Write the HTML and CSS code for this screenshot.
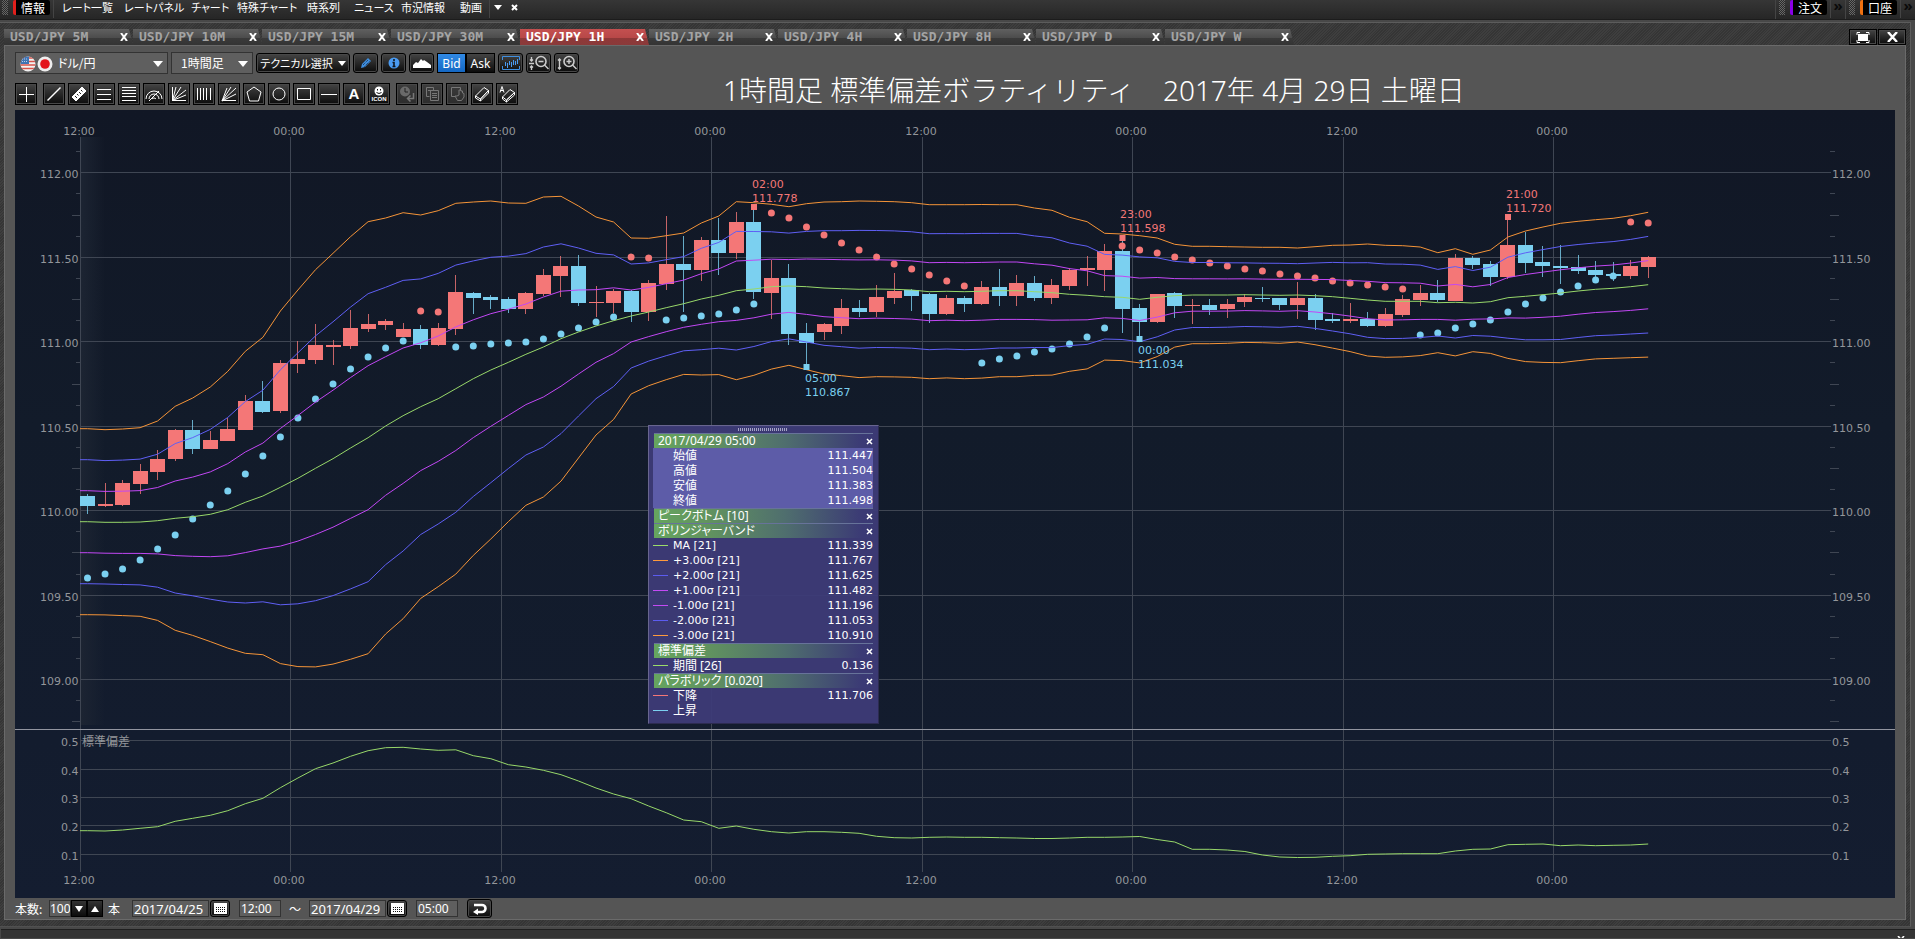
FILE: index.html
```html
<!DOCTYPE html>
<html lang="ja">
<head>
<meta charset="utf-8">
<title>USD/JPY 1H</title>
<link rel="stylesheet" href="styles.css">
</head>
<body>
<header class="menubar">
  <span class="grip"></span>
  <span class="badge badge-red">情報</span>
  <nav class="menu">
    <a href="#">レート一覧</a>
    <a href="#">レートパネル</a>
    <a href="#">チャート</a>
    <a href="#">特殊チャート</a>
    <a href="#">時系列</a>
    <a href="#">ニュース</a>
    <a href="#">市況情報</a>
    <a href="#">動画</a>
  </nav>
  <button class="bare menu-more" aria-label="メニュー"><svg width="8" height="5"><path d="M0 0h8L4 5z" fill="#fff"/></svg></button>
  <button class="bare menu-close" aria-label="閉じる"><svg width="7" height="7"><path d="M1 1l5 5M6 1l-5 5" stroke="#fff" stroke-width="2"/></svg></button>
  <div class="dock">
    <span class="grip"></span><span class="badge badge-violet">注文</span><button class="bare more" aria-label="注文メニュー">»</button>
  </div>
  <div class="dock">
    <span class="grip"></span><span class="badge badge-orange">口座</span><button class="bare more" aria-label="口座メニュー">»</button>
  </div>
</header>

<main class="window">
  <div class="tabbar">
    <div class="tab"><a href="#">USD/JPY 5M</a><button class="bare" aria-label="閉じる"><svg width="8" height="8"><path d="M1 0l6 8M7 0l-6 8"/></svg></button></div>
    <div class="tab"><a href="#">USD/JPY 10M</a><button class="bare" aria-label="閉じる"><svg width="8" height="8"><path d="M1 0l6 8M7 0l-6 8"/></svg></button></div>
    <div class="tab"><a href="#">USD/JPY 15M</a><button class="bare" aria-label="閉じる"><svg width="8" height="8"><path d="M1 0l6 8M7 0l-6 8"/></svg></button></div>
    <div class="tab"><a href="#">USD/JPY 30M</a><button class="bare" aria-label="閉じる"><svg width="8" height="8"><path d="M1 0l6 8M7 0l-6 8"/></svg></button></div>
    <div class="tab active"><a href="#">USD/JPY 1H</a><button class="bare" aria-label="閉じる"><svg width="8" height="8"><path d="M1 0l6 8M7 0l-6 8"/></svg></button></div>
    <div class="tab"><a href="#">USD/JPY 2H</a><button class="bare" aria-label="閉じる"><svg width="8" height="8"><path d="M1 0l6 8M7 0l-6 8"/></svg></button></div>
    <div class="tab"><a href="#">USD/JPY 4H</a><button class="bare" aria-label="閉じる"><svg width="8" height="8"><path d="M1 0l6 8M7 0l-6 8"/></svg></button></div>
    <div class="tab"><a href="#">USD/JPY 8H</a><button class="bare" aria-label="閉じる"><svg width="8" height="8"><path d="M1 0l6 8M7 0l-6 8"/></svg></button></div>
    <div class="tab"><a href="#">USD/JPY D</a><button class="bare" aria-label="閉じる"><svg width="8" height="8"><path d="M1 0l6 8M7 0l-6 8"/></svg></button></div>
    <div class="tab"><a href="#">USD/JPY W</a><button class="bare" aria-label="閉じる"><svg width="8" height="8"><path d="M1 0l6 8M7 0l-6 8"/></svg></button></div>
    <div class="winbtns">
      <button class="btn" aria-label="最大化"><svg width="14" height="11"><path d="M1 3V.5h3M10 .5h3V3M13 8v2.500h-3M4 10.500H1V8" fill="none" stroke="#fff"/><rect x="2" y="2" width="10" height="7" fill="#fff"/></svg></button>
      <button class="btn" aria-label="閉じる"><svg width="11" height="10"><path d="M1 0l9 10M10 0L1 10" stroke="#fff" stroke-width="2.400"/></svg></button>
    </div>
  </div>

  <section class="panel">
    <div class="head">
      <div class="tools">
        <div class="row row-main">
          <label class="pick pick-pair">
            <svg class="flags" width="34" height="16" viewBox="0 0 34 16">
              <defs><clipPath id="us"><circle cx="8" cy="8" r="7.500"/></clipPath></defs>
              <g clip-path="url(#us)"><rect width="16" height="16" fill="#f2f2f2"/><path d="M0 2h16M0 5.500h16M0 9h16M0 12.500h16" stroke="#d9534a" stroke-width="1.600"/><rect width="9" height="8" fill="#3f74b4"/><path d="M2 3h6M2 5.500h6" stroke="#b8cfe8" stroke-dasharray="1 1"/></g>
              <circle cx="25" cy="8" r="7.500" fill="#eee"/><circle cx="25" cy="8" r="4.800" fill="#e3151c"/>
            </svg>
            <select aria-label="通貨ペア"><option>ドル/円</option></select>
          </label>
          <label class="pick pick-time"><select aria-label="足種"><option>1時間足</option></select></label>
          <button class="btn tech">テクニカル選択 <svg width="8" height="5"><path d="M0 0h8L4 5z" fill="#fff"/></svg></button>
          <button class="btn" aria-label="描画"><svg width="14" height="14"><path d="M2 12l1-4 6-6 3 3-6 6z" fill="#3f8fe0"/><path d="M4 9l5-5M5.500 10.500l5-5" stroke="#14283f" stroke-dasharray="1 1"/></svg></button>
          <button class="btn" aria-label="情報"><svg width="12" height="12"><circle cx="6" cy="6" r="5.500" fill="#4a9af0"/><path d="M6 2v2M4.500 5.500H6V9M4.500 9.500h3" stroke="#10161e" stroke-width="1.600" fill="none"/></svg></button>
          <button class="btn" aria-label="エリア"><svg width="18" height="10"><path d="M0 10V7l3-3 2 1 3-4 2 2 1-1 3 2 4 3v3z" fill="#fff"/></svg></button>
          <div class="seg"><button class="on">Bid</button><button>Ask</button></div>
          <button class="btn" aria-label="全体表示"><svg width="18" height="14"><path d="M.5 4V.5h17V4M.5 10v3.500h17V10" fill="none" stroke="#3f8fe0"/><path d="M3.500 6v4M5.500 7v5M7.500 5v4M9.500 6v5M11.500 4v5M13.500 5v4M15.500 3v5" stroke="#4a9af0"/></svg></button>
          <button class="btn" aria-label="縮小"><svg width="20" height="16"><circle cx="12" cy="6.500" r="5" fill="none" stroke="#ccc" stroke-width="1.600"/><path d="M9.500 6.500h5M15.500 10l4 4M2.500 2v4M1 4.500L2.500 6 4 4.500M0 8.500h5M2.500 15v-4M1 12.500L2.500 11 4 12.500" fill="none" stroke="#ccc" stroke-width="1.400"/></svg></button>
          <button class="btn" aria-label="拡大"><svg width="20" height="16"><circle cx="12" cy="6.500" r="5" fill="none" stroke="#ccc" stroke-width="1.600"/><path d="M9.500 6.500h5M12 4v5M15.500 10l4 4M2.500 4v10M1 5.500L2.500 4 4 5.500M1 12.500L2.500 14 4 12.500" fill="none" stroke="#ccc" stroke-width="1.400"/></svg></button>
        </div>
        <div class="row row-draw">
          <button class="btn sq first" aria-label="十字"><svg width="16" height="16"><path d="M8.500 1v15M1 8.500h15"/></svg></button>
          <button class="btn sq" aria-label="直線"><svg width="16" height="16"><path d="M1.500 14.500l13-13" stroke-width="1.500"/></svg></button>
          <button class="btn sq" aria-label="定規"><svg width="16" height="16"><path d="M1 11L11 1l4 4L5 15z" fill="#fff"/><path d="M4 10l2 2M6 8l1.500 1.500M8 6l2 2M10 4l1.500 1.500" stroke="#222"/></svg></button>
          <button class="btn sq" aria-label="三本線"><svg width="16" height="16"><path d="M1 3.500h14M1 8.500h14M1 13.500h14"/></svg></button>
          <button class="btn sq" aria-label="五本線"><svg width="16" height="16"><path d="M1 1.500h14M1 4.500h14M1 7.500h14M1 10.500h14M1 14.500h14"/></svg></button>
          <button class="btn sq" aria-label="アーク"><svg width="18" height="16"><path d="M1 13a8 8 0 0 1 16 0M4 13a5 5 0 0 1 10 0M7 13a2.500 2.500 0 0 1 4 0M4 15L14 5"/></svg></button>
          <button class="btn sq" aria-label="ファン"><svg width="16" height="16"><path d="M1.500 1v13.500H15M1.500 14.500L5 1M1.500 14.500L10 1M1.500 14.500L15 4M1.500 14.500L15 9"/></svg></button>
          <button class="btn sq" aria-label="縦線"><svg width="16" height="16"><path d="M1.500 2v12M4.500 2v12M7.500 2v12M10.500 2v12M14.500 2v12"/></svg></button>
          <button class="btn sq" aria-label="扇形"><svg width="16" height="16"><path d="M1 15L6 2M1 15L10 1M1 15L15 2M1 15L15 8M1 14.500h14"/></svg></button>
          <button class="btn sq" aria-label="多角形"><svg width="16" height="16"><path d="M8 1l7 5-2.500 9h-9L1 6z"/></svg></button>
          <button class="btn sq" aria-label="円"><svg width="16" height="16"><circle cx="8" cy="8" r="6"/></svg></button>
          <button class="btn sq" aria-label="四角"><svg width="16" height="16"><path d="M1.500 2.500h13v11h-13z"/></svg></button>
          <button class="btn sq" aria-label="水平線"><svg width="16" height="16"><path d="M0 8.500h16"/></svg></button>
          <button class="btn sq letter">A</button>
          <button class="btn sq icon-btn" aria-label="アイコン"><svg width="10" height="10"><circle cx="5" cy="5" r="4.500" fill="#fff" stroke="none"/><path d="M3.500 3v1.500M6.500 3v1.500M2.500 6.500q2.500 2 5 0" stroke="#111"/></svg><span>ICON</span></button>
          <button class="btn sq off gap" aria-label="元に戻す" disabled><svg width="16" height="16"><circle cx="6" cy="5.500" r="5" fill="#6a6a6a" stroke="none"/><path d="M6 2v4h3" stroke="#222"/><path d="M14.500 7v5.500H9M11.500 9.500l-3 3 3 3" stroke-width="1.500"/></svg></button>
          <button class="btn sq off" aria-label="コピー" disabled><svg width="16" height="16"><path d="M2.500 1.500h7v3M2.500 1.500v9h3M6.500 4.500h8v10h-8zM8 7.500h5M8 9.500h5M8 11.500h5M4 4.500h3"/></svg></button>
          <button class="btn sq off" aria-label="移動" disabled><svg width="16" height="16"><path d="M6 10.500H2.500v-9h9v3M6 10l2.500 4.500h4L15 11V7.500L13.500 7V5L12 5V4L10 4v5L8 10z"/></svg></button>
          <button class="btn sq" aria-label="消しゴム"><svg width="16" height="16"><path d="M1.500 10L10 1.500l4.500 3L6.500 13zM1.500 10v2l5 3v-2l8-8.500v2.500L6.500 15"/></svg></button>
          <button class="btn sq" aria-label="全消去"><svg width="17" height="17"><path d="M3.500 11L11 3.500l4.500 3-8 7.500zM3.500 11v2l4 3v-2l8-7.500V9l-8 7M1 6.500l2-6 2 6M1.500 4.500h3"/></svg></button>
        </div>
      </div>
      <h1 class="title">1時間足 標準偏差ボラティリティ　2017年 4月 29日 土曜日</h1>
    </div>

    <div class="chartbox">
      <svg id="chart" class="chart" viewBox="15 110 1880 788" role="img" aria-label="USD/JPY 1時間足チャート"></svg>
      <aside class="info">
        <div class="info-grip"></div>
        <table>
          <tbody>
          <tr class="hd"><th colspan="2"><div>2017/04/29 05:00<button class="bare x" aria-label="閉じる"><svg width="7" height="7"><path d="M1 1l5 5M6 1l-5 5"/></svg></button></div></th></tr>
          <tr class="hl"><td>始値</td><td>111.447</td></tr>
          <tr class="hl"><td>高値</td><td>111.504</td></tr>
          <tr class="hl"><td>安値</td><td>111.383</td></tr>
          <tr class="hl"><td>終値</td><td>111.498</td></tr>
          <tr class="hd"><th colspan="2"><div>ピークボトム [10]<button class="bare x" aria-label="閉じる"><svg width="7" height="7"><path d="M1 1l5 5M6 1l-5 5"/></svg></button></div></th></tr>
          <tr class="hd"><th colspan="2"><div>ボリンジャーバンド<button class="bare x" aria-label="閉じる"><svg width="7" height="7"><path d="M1 1l5 5M6 1l-5 5"/></svg></button></div></th></tr>
          <tr class="key num green"><td>MA [21]</td><td>111.339</td></tr>
          <tr class="key num orange"><td>+3.00σ [21]</td><td>111.767</td></tr>
          <tr class="key num blue"><td>+2.00σ [21]</td><td>111.625</td></tr>
          <tr class="key num purple"><td>+1.00σ [21]</td><td>111.482</td></tr>
          <tr class="key num purple"><td>-1.00σ [21]</td><td>111.196</td></tr>
          <tr class="key num blue"><td>-2.00σ [21]</td><td>111.053</td></tr>
          <tr class="key num orange"><td>-3.00σ [21]</td><td>110.910</td></tr>
          <tr class="hd"><th colspan="2"><div>標準偏差<button class="bare x" aria-label="閉じる"><svg width="7" height="7"><path d="M1 1l5 5M6 1l-5 5"/></svg></button></div></th></tr>
          <tr class="key green"><td>期間 [26]</td><td>0.136</td></tr>
          <tr class="hd"><th colspan="2"><div>パラボリック [0.020]<button class="bare x" aria-label="閉じる"><svg width="7" height="7"><path d="M1 1l5 5M6 1l-5 5"/></svg></button></div></th></tr>
          <tr class="key red"><td>下降</td><td>111.706</td></tr>
          <tr class="key sky"><td>上昇</td><td></td></tr>
          </tbody>
        </table>
      </aside>
    </div>

    <form class="range">
      <label for="bars">本数:</label>
      <span class="spin"><input id="bars" class="bars" value="100"><button type="button" aria-label="減らす"><svg width="8" height="6"><path d="M0 0h8L4 6z" fill="#fff"/></svg></button><button type="button" aria-label="増やす"><svg width="8" height="6"><path d="M0 6h8L4 0z" fill="#fff"/></svg></button></span>
      <span class="unit">本</span>
      <span class="date"><input class="day" aria-label="開始日" value="2017/04/25"><button type="button" class="btn cal" aria-label="カレンダー"><svg width="13" height="11"><path d="M0 0h13v11H0z" fill="#fff"/><path d="M2 4.500h9M2 6.500h9M2 8.500h9" stroke="#111" stroke-dasharray="1 1"/></svg></button></span>
      <input class="time" aria-label="開始時刻" value="12:00">
      <span class="tilde">～</span>
      <span class="date"><input class="day" aria-label="終了日" value="2017/04/29"><button type="button" class="btn cal" aria-label="カレンダー"><svg width="13" height="11"><path d="M0 0h13v11H0z" fill="#fff"/><path d="M2 4.500h9M2 6.500h9M2 8.500h9" stroke="#111" stroke-dasharray="1 1"/></svg></button></span>
      <input class="time" aria-label="終了時刻" value="05:00">
      <button type="button" class="btn go" aria-label="更新"><svg width="14" height="12"><path d="M1 2h8a3.500 3.500 0 0 1 0 7H4" fill="none" stroke="#fff" stroke-width="2.600"/><path d="M0 9l5-3.500v6.500z" fill="#fff"/></svg></button>
    </form>
  </section>
</main>

<footer class="status">
  <button class="bare" aria-label="閉じる"><svg width="8" height="7"><path d="M1 0l6 7M7 0L1 7" stroke="#fff" stroke-width="1.600"/></svg></button>
</footer>
<script src="chart.js"></script>
</body>
</html>
```

FILE: styles.css
```css
* { box-sizing: border-box; }

body {
  margin: 0;
  min-height: 100vh;
  display: flex;
  flex-direction: column;
  overflow-x: hidden;
  background: #484848;
  color: #fff;
  font: 12px/15px "Noto Sans", "Noto Sans CJK JP", sans-serif;
}

a { color: inherit; text-decoration: none; }
button, input, select { font: inherit; color: inherit; }
button { padding: 0; display: flex; align-items: center; justify-content: center; flex: none; }
svg { display: block; flex: none; }
.bare { border: 0; background: none; }

/* menu bar */
.menubar {
  display: flex;
  align-items: stretch;
  height: 20px;
  border-bottom: 1px solid #1c1c1c;
  background: linear-gradient(#363636, #262626);
}
.grip {
  width: 6px;
  height: 15px;
  margin: 0 5px 0 2px;
  background: repeating-conic-gradient(#666 0 25%, #2a2a2a 0 50%) 0 0 / 2px 2px;
}
.badge {
  height: 15px;
  padding: 0 5px;
  border-left: 3px solid red;
  border-radius: 2px;
  background: #000;
  font: 12px/15px "Noto Sans CJK JP", sans-serif;
}
.badge-red { border-color: #e0201c; }
.badge-violet { border-color: #8a00e8; }
.badge-orange { border-color: #ee7010; }
.menu {
  display: grid;
  grid-template-columns: 62px 67px 46px 70px 47px 47px 59px 29px;
  height: 18px;
  margin-left: 3px;
  padding-left: 8px;
  border-left: 1px solid #444;
  border-right: 1px solid #444;
  font: 11px/15px "Noto Sans CJK JP", sans-serif;
  font-feature-settings: "palt";
  white-space: nowrap;
}
.menu-more { width: 16px; height: 15px; }
.menu-close { width: 16px; height: 15px; margin-right: auto; }
.dock { display: flex; border-left: 1px solid #444; padding-left: 1px; }
.more {
  width: 15px;
  height: 18px;
  margin-left: 3px;
  align-items: flex-start;
  border-left: 1px solid #444;
  color: #0a0a0a;
  font-size: 15px;
  font-weight: bold;
  line-height: 10px;
}

/* window frame */
.window {
  margin: 2px 4px 0 0;
  padding: 0 4px 6px 4px;
  border-top: 1px solid #5c5c5c;
  border-right: 1px solid #5c5c5c;
  border-bottom: 1px solid #505050;
  background: repeating-linear-gradient(135deg, #353535 0 1px, #3e3e3e 1px 2px);
}
.tabbar { display: flex; height: 22px; padding-top: 6px; }
.tab {
  flex: 0 1 129px;
  display: flex;
  align-items: center;
  justify-content: space-between;
  padding: 0 5px 0 6px;
  background: linear-gradient(#606060, #4c4c4c 55%, #3a3a3a 56%, #343434);
  clip-path: polygon(0 100%, 0 0, 125px 0, 100% 100%);
  color: #a4a4a4;
  font: bold 13px/16px "DejaVu Sans Mono", monospace;
  white-space: nowrap;
}
.tab svg path { stroke: #fff; stroke-width: 2; }
.tab.active {
  background: linear-gradient(#c45050, #b84848 55%, #8f3838 56%, #8a3a3a);
  color: #fff;
}
.winbtns { display: flex; gap: 1px; margin-left: auto; }
.winbtns .btn { width: 28px; height: 16px; border-radius: 0; }

.panel {
  padding: 0 10px;
  border: 1px solid #6a6a6a;
  background: #555;
}

/* tool bars */
.head { display: flex; align-items: flex-end; height: 64px; }
.tools { width: 565px; height: 64px; padding-top: 6px; }
.row { display: flex; align-items: center; }
.row-main { height: 22px; gap: 3px; }
.row-draw { height: 22px; gap: 3px; margin-top: 9px; }
.btn {
  width: 25px;
  height: 20px;
  border: 1px solid #000;
  border-radius: 3px;
  background: linear-gradient(#444, #0c0c0c);
  box-shadow: inset 0 0 0 1px #484848;
}
.sq { width: 22px; height: 22px; border-radius: 0; }
.sq svg { fill: none; stroke: #fff; }
.first { margin-right: 3px; }
.gap { margin-left: 3px; }
.off { background: linear-gradient(#3c3c3c, #2c2c2c); }
.off svg { stroke: #777; }
.letter { font: bold 15px/18px "Liberation Sans", sans-serif; }
.icon-btn { flex-direction: column; }
.icon-btn span { font: bold 6px/6px "Liberation Sans", sans-serif; }
.pick {
  position: relative;
  display: flex;
  font: 12px/18px "Noto Sans CJK JP", sans-serif;
  font-feature-settings: "palt";
}
.pick select {
  width: 100%;
  height: 22px;
  padding: 0 20px 0 9px;
  border: 1px solid #333;
  border-radius: 0;
  background: #5f5f5f;
  appearance: none;
}
.pick::after {
  content: "";
  position: absolute;
  right: 5px;
  top: 9px;
  border: 5px solid transparent;
  border-top: 6px solid #fff;
  border-bottom: 0;
}
.pick-pair { width: 153px; }
.pick-pair select { padding-left: 42px; }
.pick-time { width: 82px; }
.flags { position: absolute; left: 5px; top: 4px; }
.tech {
  width: 94px;
  gap: 5px;
  font: 11px/16px "Noto Sans CJK JP", sans-serif;
  font-feature-settings: "palt";
  white-space: nowrap;
}
.seg { display: flex; }
.seg button {
  width: 29px;
  height: 20px;
  border: 1px solid #000;
  background: linear-gradient(#444, #0c0c0c);
}
.seg .on { background: linear-gradient(#3089e4, #1468c4); }
.title {
  margin: 0 0 0 143px;
  padding-bottom: 2px;
  font: 28px/36px "Noto Sans", "Noto Sans CJK JP", sans-serif;
  font-weight: 300;
  white-space: nowrap;
}

/* chart */
.chartbox { position: relative; }
.chart {
  width: 100%;
  height: auto;
  background: linear-gradient(#111725, #121b2a 40%, #131c2e 80%, #141d30);
}
.grid line { stroke: #3f4653; }
.axis text { fill: #93969a; font: 11px "DejaVu Sans", "Noto Sans CJK JP", sans-serif; }
.axis .name { font-size: 12px; }
.peak text { font: 11px "DejaVu Sans", sans-serif; }
.up { fill: #f47777; stroke: #f47777; }
.down { fill: #7bd0f0; stroke: #7bd0f0; }
.wick { stroke-width: 1; opacity: .8; }
.body, .dot, .peak text { stroke: none; }
.band { fill: none; stroke-width: 1; }
.o { stroke: #f59438; }
.b { stroke: #5f5ff5; }
.p { stroke: #c247f5; }
.g { stroke: #98d86a; }

.info {
  position: absolute;
  left: 633px;
  top: 315px;
  width: 231px;
  padding: 2px 5px 5px 4px;
  border: 1px solid #68658f;
  border-right-color: #2c2b50;
  border-bottom-color: #2c2b50;
  background: rgba(62, 59, 120, .94);
}
.info-grip {
  width: 50px;
  height: 3px;
  margin: 0 auto 2px;
  background: repeating-linear-gradient(90deg, #a5a4c4 0 1px, transparent 1px 2px);
}
.info table { width: 100%; border-collapse: collapse; }
.info tr { height: 15px; }
.info th, .info td { padding: 0; font-weight: normal; line-height: 15px; text-align: left; white-space: nowrap; }
.info td:first-child { padding-left: 20px; }
.info td:last-child { text-align: right; }
.info td:last-child, .info .num td { font: 11px/15px "DejaVu Sans", sans-serif; }
.hd div {
  display: flex;
  justify-content: space-between;
  align-items: center;
  height: 15px;
  margin-left: 1px;
  padding: 0 0 0 4px;
  border-top: 1px solid #67739a;
  background: linear-gradient(90deg, #66a55f 0, #61935f 25%, #4f6e6e 60%, #3b3a75 95%);
  font-feature-settings: "palt";
  line-height: 14px;
}
.hl { background: #5d5ca8; }
.x svg { stroke: #fff; stroke-width: 1.500px; }
.key td:first-child { background: linear-gradient(var(--c), var(--c)) 0 7px / 15px 1px no-repeat; }
.green { --c: #9bdc6a; }
.orange { --c: #ff9a3c; }
.blue { --c: #5c5cf0; }
.purple { --c: #c44af5; }
.red { --c: #f47777; }
.sky { --c: #7bd0f0; }

/* date range */
.range {
  display: flex;
  align-items: center;
  height: 21px;
  font: 12px/16px "Noto Sans CJK JP", sans-serif;
}
.range input {
  height: 17px;
  padding: 0 1px;
  border: 1px solid #333;
  background: #5f5f5f;
  font: 12px/15px "Noto Sans", sans-serif;
}
.range label { width: 34px; }
.spin, .date { display: flex; align-items: center; }
.spin button { width: 16px; height: 17px; border: 1px solid #000; background: linear-gradient(#333, #0c0c0c); }
.range .bars { width: 22px; padding: 0; }
.unit { width: 29px; padding-left: 5px; }
.range .day { width: 77px; font-size: 13px; }
.cal { width: 20px; height: 17px; margin-left: 1px; }
.time { width: 42px; margin-left: 9px; }
.tilde { width: 28px; padding-left: 8px; }
.go { height: 19px; margin-left: 9px; }

.status {
  flex: 1;
  display: flex;
  justify-content: flex-end;
  align-items: flex-start;
  min-height: 8px;
  margin: 2px 0 0 1px;
  padding: 6px 10px 0 0;
  border-top: 1px solid #1f1f1f;
  background: #343434;
  max-height: 9px;
  overflow: hidden;
}
```

FILE: chart.js
```js
const svg = document.getElementById('chart');
const X0 = 87.5, STEP = 17.536;
const xAt = i => X0 + STEP * i;
const parts = [];

// direction, high, body top, body bottom, low
const candles = `d494,496,506,514 u483,504,506,507 u480,483,505,506 u464,471,484,494 u450,459,472,480 u429,430,459,461
d420,430,449,454 u431,440,449,449 u418,429,441,441 u395,401,430,430 d381,401,412,413 u360,363,411,413
u341,359,364,373 u324,345,360,364 u340,345,347,365 u310,328,346,349 u314,324,329,332 u319,321,325,330
u323,329,337,337 d325,329,345,349 u323,328,345,346 u275,292,329,335 d292,293,298,314 d295,297,300,309
d297,299,309,313 u292,293,309,314 u269,275,294,296 u256,266,276,297 d255,266,303,306 u286,302,303,317
u289,291,303,313 d290,291,312,322 u280,283,312,321 u216,264,284,290 d236,264,270,312 u237,240,270,281
d218,240,253,275 u212,222,253,259 d207,222,292,299 u260,278,293,319 d264,278,334,345 d323,333,343,367
u323,324,332,340 u299,308,326,334 d300,308,312,317 u285,297,312,317 u273,291,298,304 d289,290,296,311
d293,294,314,323 u295,298,314,315 d296,298,304,312 u281,287,304,305 d269,287,296,306 u275,283,296,306
d276,283,298,301 u279,285,298,304 u268,270,286,290 u256,268,270,286 u244,251,270,291 d240,251,309,333
d304,308,322,339 u294,294,322,323 d292,293,306,318 u299,305,306,324 d299,305,310,315 u299,304,309,318
u294,297,302,307 d287,298,299,302 d298,298,305,310 u282,298,305,319 d294,298,320,330 d313,319,321,323
u303,319,321,323 d312,319,326,327 u308,314,326,327 u295,299,315,317 u285,293,300,306 d280,293,300,302
u254,258,301,301 d256,258,265,269 d261,264,277,286 u217,245,277,279 d232,245,263,273 d246,262,266,277
d245,266,268,284 d255,267,271,274 d261,270,275,280 d262,274,276,281 u260,266,276,279 u256,257,267,278`.trim().split(/\s+/);

// y of the parabolic points; u marks the falling phase drawn above price
const sar = `578 574 569 560 549 535 519 505 491 474 456 437 418 399 384 369 357 348 341 u311 u312 347 346 344 343 342 339 334
328 322 317 u257 u258 320 318 316 314 310 304 u213 u218 u227 u235 u243 u250 u257 u264 u269 u275 u281 u286 363 359 356 352 349
344 337 328 u246 u250 u253 u257 u260 u263 u266 u269 u271 u274 u276 u278 u281 u283 u285 u287 u289 335 333 328 324 320 312 304
298 292 286 280 276 u222 u223`.trim().split(/\s+/);

const nums = s => s.trim().split(/\s+/).map(Number);
const ma = nums(`521.7 522.3 522.3 522 520.7 518.3 516.7 514.3 509.7 502.3 496 487.3 478.3 468.3 458.7 448 437.7 426 415.7 406.7
398.7 388.7 378.7 370 362.3 354.3 347 338.7 332 326 320.7 316 312 307.7 303.7 299 295.3 290.7 289 286.7 286 286.7 288 288.7 289.3
289 289.3 290 291.7 291.3 291.7 291.3 290.7 290.7 291.7 292.7 294.3 295.3 296.7 297.3 299.3 297.3 295.7 295 295 295 294.7 295
295.3 295 295.7 296.7 298.3 300 301.3 301.3 301.3 302.7 302.3 303 301.7 297.7 296.3 294.7 293 291 289.3 288.3 286.7 284.7`);
const upper = nums(`428.7 429.7 429 427.7 421 406.3 398 387 371.3 351.3 337.3 311 290 269.7 253.3 236.7 221.7 218 212.7 215 210.7
203.3 202 201 203 203.3 197 196.3 206 217 222 238 238.3 235.7 233 223 216 201.7 202.7 204.3 206.7 203.7 202 201.7 201 201.3 201.7
202.7 204.7 204.7 204.7 204.5 204.7 204.7 208 210.3 217.3 221.7 233.3 234 235.7 238 244.3 246.3 246.3 246.7 247 247.3 247.3 248
246.7 245.3 245 244 245.3 245.7 247 252.7 248.7 254.3 250 237 231 227 223.3 221.3 219.7 218.3 215.7 212.3`);
const dev = nums(`830.7 831 830 828.3 826.7 821.3 818.3 815.3 810.7 803.7 798.3 787.7 778 768.7 763 756.3 750.7 747.7 747.3 749
750.3 749.8 755.7 758.7 764.7 767 770.3 774.7 781 788 794 798.7 806 812.7 820 821.7 828.3 826 829.3 831.7 833 831.7 831.7 832.3
833.3 836.3 837.7 838 837.3 837 837.3 837.3 837.7 838 838.5 838.5 838 837.3 837.3 837 836.5 839.5 842 849.3 849.3 850 851.5 855
857 857.5 857.3 856.3 855.7 854.3 854 853.7 853.7 853.7 851 849.3 849 844.7 844.3 844 845.7 845 845.7 845.3 845 844`);

const line = (x1, y1, x2, y2, cls = '') => `<line class="${cls}" x1="${x1}" y1="${y1}" x2="${x2}" y2="${y2}"/>`;
const text = (x, y, s, anchor = 'start', cls = '') => `<text class="${cls}" x="${x}" y="${y}" text-anchor="${anchor}">${s}</text>`;

parts.push(`<defs><linearGradient id="glow"><stop stop-color="#1c2432"/><stop offset="1" stop-color="#1c2432" stop-opacity="0"/></linearGradient>
<clipPath id="plot"><rect x="80" y="110" width="1750" height="788"/></clipPath></defs>
<rect x="81" y="137" width="24" height="588" fill="url(#glow)"/>`);

const times = [80.5, 290.5, 501.5, 711.5, 922.5, 1132.5, 1343.5, 1553.5];
const prices = [[172.5, '112.00'], [257.5, '111.50'], [341.5, '111.00'], [426.5, '110.50'], [510.5, '110.00'], [595.5, '109.50'], [679.5, '109.00']];
const devs = [[740.5, '0.5'], [769.5, '0.4'], [797.5, '0.3'], [825.5, '0.2'], [854.5, '0.1']];

parts.push('<g class="grid">');
times.forEach(x => parts.push(line(x, 137, x, 872)));
[...prices, ...devs].forEach(([y]) => parts.push(line(81, y, 1831, y)));
[151.5, 193.5, 236.5, 278.5, 320.5, 362.5, 405.5, 447.5, 489.5, 531.5, 574.5, 616.5, 658.5, 700.5].forEach(y =>
  parts.push(line(76, y, 80, y), line(1830, y, 1835, y)));
[215.5, 299.5, 384.5, 468.5, 552.5, 637.5, 721.5].forEach(y =>
  parts.push(line(72, y, 80, y), line(1830, y, 1839, y)));
parts.push('</g>', '<path d="M15 729.5H1895" stroke="#9295a0"/>');

parts.push('<g class="axis">');
times.forEach((x, i) => {
  const t = i % 2 ? '00:00' : '12:00';
  parts.push(text(x - 1.5, 135, t, 'middle'), text(x - 1.5, 884, t, 'middle'));
});
[...prices, ...devs].forEach(([y, s]) => parts.push(text(78.5, y + 5.5, s, 'end'), text(1832, y + 5.5, s)));
parts.push(text(82, 746, '標準偏差', 'start', 'name'), '</g>');

parts.push('<g clip-path="url(#plot)">');
candles.forEach((c, i) => {
  const cls = c[0] === 'u' ? 'up' : 'down';
  const [h, t, b, l] = c.slice(1).split(',').map(Number);
  const x = Math.floor(xAt(i)) + 0.5;
  parts.push(line(x, h, x, l, `${cls} wick`));
  parts.push(`<rect class="${cls} body" x="${x - 7.5}" y="${t}" width="15" height="${Math.max(b - t, 1)}"/>`);
});
sar.forEach((s, i) => {
  const up = s[0] === 'u';
  parts.push(`<circle class="${up ? 'up' : 'down'} dot" cx="${xAt(i)}" cy="${up ? s.slice(1) : s}" r="3.5"/>`);
});
const band = (ys, cls) => parts.push(`<polyline class="band ${cls}" points="80,${ys[0]} ${ys.map((y, i) => `${xAt(i).toFixed(1)},${y.toFixed(1)}`).join(' ')}"/>`);
[[3, 'o'], [2, 'b'], [1, 'p'], [-1, 'p'], [-2, 'b'], [-3, 'o']].forEach(([k, cls]) =>
  band(ma.map((m, i) => m + (upper[i] - m) * k / 3), cls));
band(ma, 'g');
band(dev, 'g');
parts.push('</g>');

[['up', 754, 207, 752, 188, '02:00', '111.778'], ['down', 806.5, 367, 805, 382, '05:00', '110.867'],
 ['up', 1122.5, 238, 1120, 218, '23:00', '111.598'], ['down', 1139.5, 339, 1138, 354, '00:00', '111.034'],
 ['up', 1508, 217, 1506, 198, '21:00', '111.720']].forEach(([cls, cx, cy, tx, ty, t, v]) =>
  parts.push(`<g class="peak ${cls}"><rect class="body" x="${cx - 3}" y="${cy - 3}" width="6" height="6"/>${text(tx, ty, t)}${text(tx, ty + 14, v)}</g>`));

svg.innerHTML = parts.join('');
```
